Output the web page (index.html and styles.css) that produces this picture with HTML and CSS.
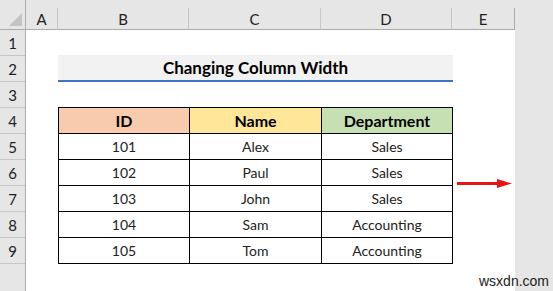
FILE: index.html
```html
<!DOCTYPE html>
<html lang="en">
<head>
    <meta charset="UTF-8">
    <title>Changing Column Width</title>
    <link rel="stylesheet" href="styles.css">
</head>
<body>
    <div class="sheet">
        <div class="colhead">
            <div class="corner">
                <svg width="13" height="13" viewBox="0 0 13 13"><polygon points="13,0 13,13 0,13" fill="#c4c4c4"/></svg>
            </div>
            <div class="col col-a">A</div>
            <div class="col col-b">B</div>
            <div class="col col-c">C</div>
            <div class="col col-d">D</div>
            <div class="col col-e">E</div>
        </div>

        <div class="main">
            <div class="rowheads">
                <div class="rowhead">1</div>
                <div class="rowhead">2</div>
                <div class="rowhead">3</div>
                <div class="rowhead">4</div>
                <div class="rowhead">5</div>
                <div class="rowhead">6</div>
                <div class="rowhead">7</div>
                <div class="rowhead">8</div>
                <div class="rowhead">9</div>
            </div>

            <div class="cells">
                <div class="title">Changing Column Width</div>

                <table class="data">
                    <tr>
                        <th class="h-id">ID</th>
                        <th class="h-name">Name</th>
                        <th class="h-dept">Department</th>
                    </tr>
                    <tr><td>101</td><td>Alex</td><td>Sales</td></tr>
                    <tr><td>102</td><td>Paul</td><td>Sales</td></tr>
                    <tr><td>103</td><td>John</td><td>Sales</td></tr>
                    <tr><td>104</td><td>Sam</td><td>Accounting</td></tr>
                    <tr><td>105</td><td>Tom</td><td>Accounting</td></tr>
                </table>

                <!-- arrow pointing at the E column edge -->
                <svg class="arrow" width="56" height="11" viewBox="0 0 56 11">
                    <rect x="0" y="4" width="42" height="3" fill="#e81414"/>
                    <polygon points="40,1 55,5.5 40,10" fill="#e81414"/>
                </svg>
            </div>
        </div>

        <div class="watermark">wsxdn.com</div>
    </div>
</body>
</html>
```

FILE: styles.css
```css
* {
    box-sizing: border-box;
}
body {
    margin: 0;
    background-color: #e6e6e6;
    font-family: Lato, "Open Sans", sans-serif;
    color: #111;
}
.sheet {
    position: relative;
    width: 553px;
    height: 291px;
    overflow: hidden;
}
.colhead {
    display: flex;
    height: 30px;
}
.corner {
    width: 26px;
    height: 30px;
    padding: 13px 0 0 9px;
    border-right: 1px solid #ababab;
    border-bottom: 1px solid #ababab;
}
.corner svg {
    display: block;
}
.col {
    margin-top: 8px;
    height: 22px;
    border-right: 1px solid #c6c6c6;
    border-bottom: 1px solid #ababab;
    text-align: center;
    font-size: 15px;
    line-height: 22px;
    color: #222;
}
.col-a { width: 32px; }
.col-b { width: 131px; }
.col-c { width: 132px; }
.col-d { width: 131px; }
.col-e { width: 63px; border-right-color: #ababab; }
.main {
    display: flex;
    height: 261px;
}
.rowheads {
    width: 26px;
    border-right: 1px solid #ababab;
}
.rowhead {
    height: 26px;
    border-bottom: 1px solid #c6c6c6;
    text-align: center;
    font-size: 15px;
    line-height: 27px;
    color: #222;
}
.cells {
    position: relative;
    width: 489px;
    background-color: #fff;
    padding: 25px 0 0 32px;
}
.title {
    width: 395px;
    height: 27px;
    background-color: #f2f2f2;
    border-bottom: 2px solid #4472c4;
    text-align: center;
    font-weight: bold;
    font-size: 17px;
    line-height: 26px;
    color: #000;
}
.data {
    margin-top: 25px;
    border-collapse: collapse;
}
.data th, .data td {
    border: 1px solid #000;
    height: 26px;
    padding: 0;
    text-align: center;
    font-size: 14px;
}
.data th {
    font-size: 16px;
    font-weight: bold;
    color: #000;
}
.data td {
    color: #222;
}
.h-id {
    width: 131px;
    background-color: #f8cbad;
}
.h-name {
    width: 132px;
    background-color: #ffe699;
}
.h-dept {
    width: 131px;
    background-color: #c6e0b4;
}
.arrow {
    position: absolute;
    left: 431px;
    top: 148px;
}
.watermark {
    position: absolute;
    left: 479px;
    top: 273px;
    font-family: "Liberation Sans", Arial, sans-serif;
    font-size: 14px;
    color: #222;
}
```
